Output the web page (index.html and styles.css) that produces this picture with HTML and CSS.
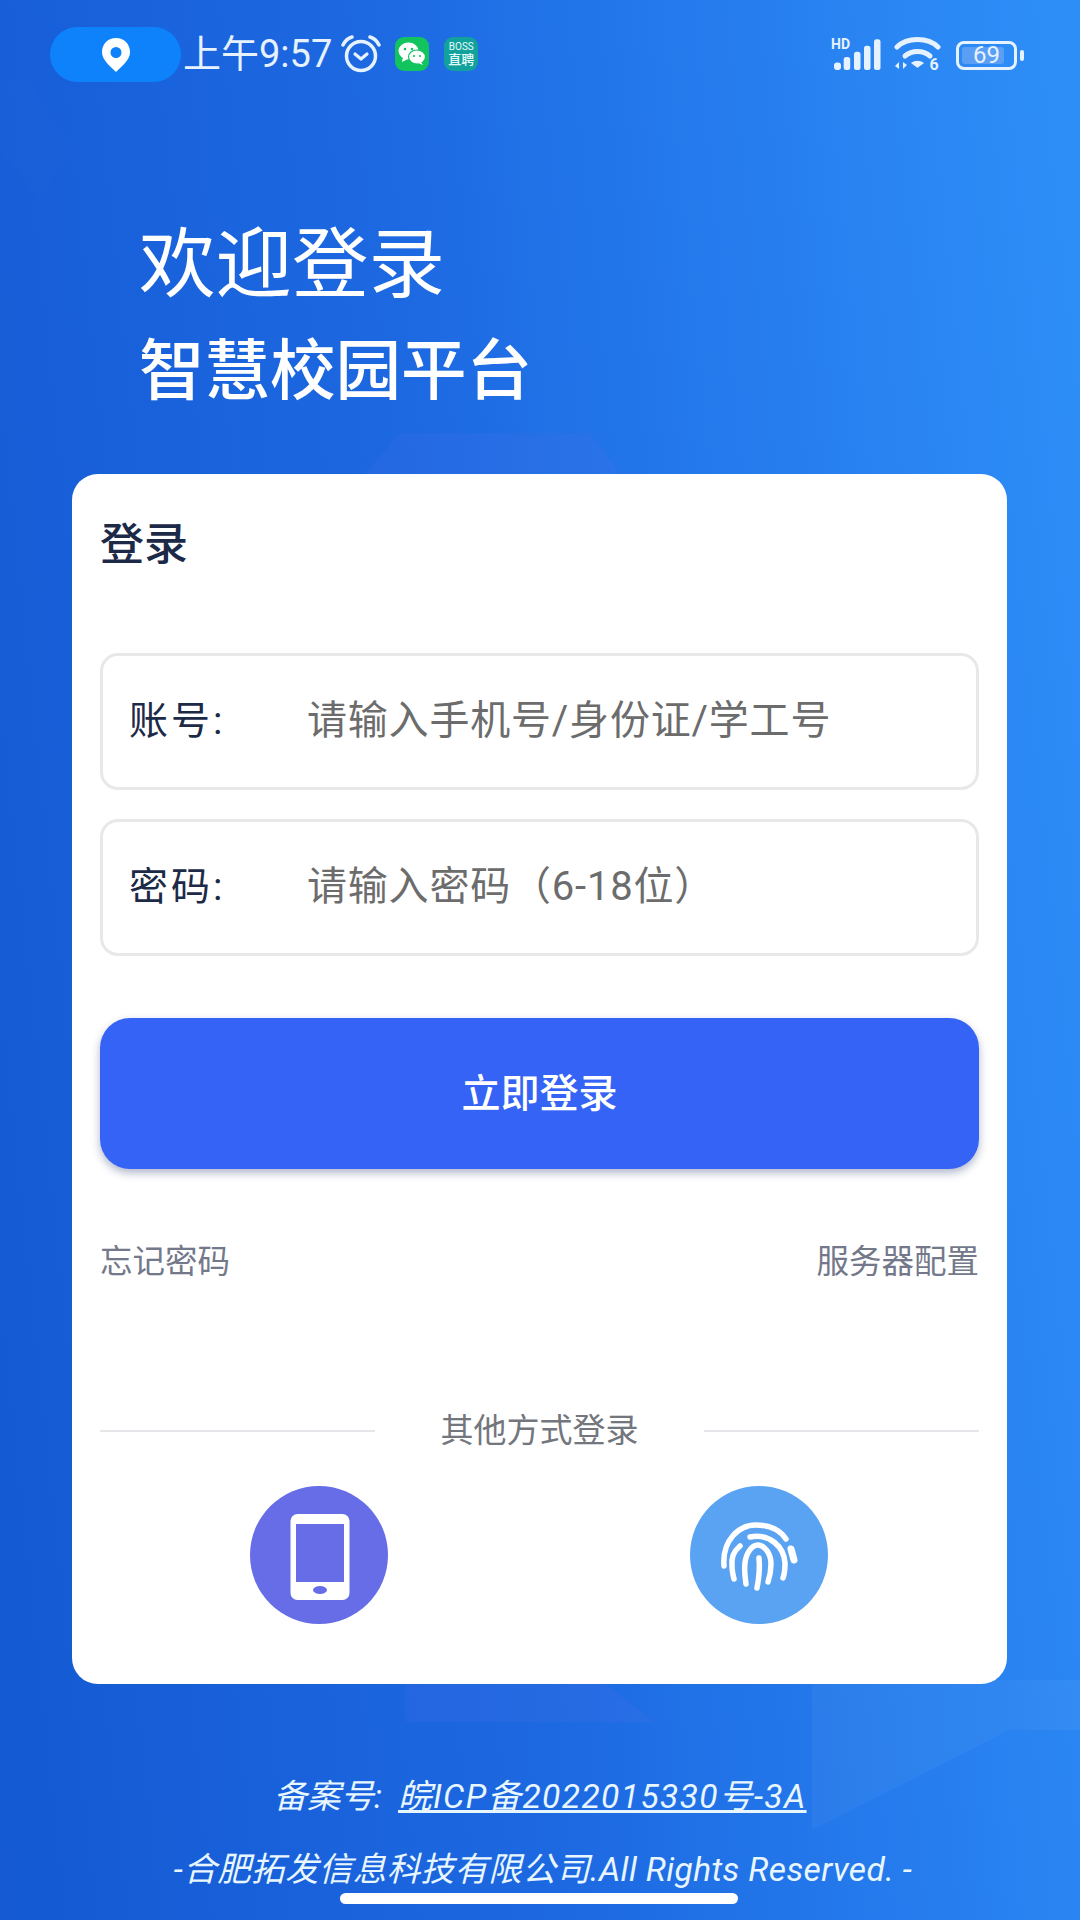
FILE: index.html
```html
<!DOCTYPE html>
<html lang="zh-CN">
<head>
    <meta charset="UTF-8">
    <meta name="viewport" content="width=device-width, initial-scale=1.0">
    <title>欢迎登录</title>
    <link rel="stylesheet" href="styles.css">
</head>
<body>
    <div class="page">
        <!-- faint shapes in the background -->
        <svg class="bg-shapes" width="1080" height="1920" viewBox="0 0 1080 1920">
            <polygon points="0,80 30,80 70,150 40,200 0,150" fill="#fff" opacity="0.012"/>
            <polygon points="400,433 590,433 620,474 365,474" fill="#5a70e8" opacity="0.14"/>
            <polygon points="406,1680 600,1680 654,1722 406,1722" fill="#5a70e8" opacity="0.16"/>
            <polygon points="812,1680 1080,1680 1080,1730 1010,1730 812,1830" fill="#fff" opacity="0.04"/>
        </svg>

        <div class="status-bar">
            <div class="status-left">
                <div class="location-pill">
                    <svg width="28" height="34" viewBox="0 0 28 34"><path fill="#fff" fill-rule="evenodd" d="M14 0C6 0 0 6 0 14c0 8 8 14 14 20 6-6 14-12 14-20C28 6 22 0 14 0zm0 9a5.5 5.500 0 1 1 0 11 5.500 5.500 0 0 1 0-11z"/></svg>
                </div>
                <span class="clock">上午9:57</span>
                <svg class="alarm" width="40" height="38" viewBox="0 0 40 38" fill="none" stroke="#e6f2ff" stroke-linecap="round">
                    <circle cx="20" cy="21" r="14.500" stroke-width="3.500"/>
                    <path d="M14 19l6 5 6-5" stroke-width="3.200" stroke-linejoin="round"/>
                    <path d="M2 10C4 6 7 3 11 2M38 10c-2-4-5-7-9-8" stroke-width="3.500"/>
                </svg>
                <div class="app-icon wechat">
                    <svg width="28" height="24" viewBox="0 0 28 24">
                        <ellipse cx="10.500" cy="9" rx="10" ry="8.500" fill="#fff"/>
                        <path d="M5 15l-1 5 6-3z" fill="#fff"/>
                        <ellipse cx="19" cy="15" rx="8.500" ry="7" fill="#fff" stroke="#12c45d" stroke-width="1.200"/>
                        <path d="M23 20l2 3-5-2z" fill="#fff"/>
                        <circle cx="7" cy="7" r="1.300" fill="#12c45d"/>
                        <circle cx="14" cy="7" r="1.300" fill="#12c45d"/>
                        <circle cx="16" cy="14" r="1.100" fill="#12c45d"/>
                        <circle cx="22" cy="14" r="1.100" fill="#12c45d"/>
                    </svg>
                </div>
                <div class="app-icon boss">
                    <span class="boss-en">BOSS</span>
                    <span class="boss-cn">直聘</span>
                </div>
            </div>
            <div class="status-right">
                <svg class="signal" width="50" height="42" viewBox="0 -8 50 42">
                    <text x="0" y="11" class="hd-text">HD</text>
                    <g fill="#e6f2ff">
                        <rect x="3" y="24.500" width="7" height="7.500" rx="3"/>
                        <rect x="12.700" y="19" width="6.500" height="13" rx="2.500"/>
                        <rect x="23" y="13.700" width="6.500" height="18.300" rx="2.500"/>
                        <rect x="33" y="7.700" width="6.500" height="24.300" rx="2.500"/>
                        <rect x="43" y="1.300" width="6.500" height="30.700" rx="2.500"/>
                    </g>
                </svg>
                <svg class="wifi" width="48" height="42" viewBox="0 0 48 42" fill="none" stroke="#e6f2ff" stroke-width="5" stroke-linecap="round">
                    <path d="M3 11C13 1 34 1 44 11"/>
                    <path d="M11 20c7-6 18-6 25 0"/>
                    <path d="M18 27c3-2 8-2 11 0l-5.500 4z" fill="#e6f2ff" stroke-width="1.500" stroke-linejoin="round"/>
                    <path d="M5 26v7l-4-3zM9 33v-7l4 3z" fill="#e6f2ff" stroke="none"/>
                    <text x="35.500" y="34" class="wifi-six">6</text>
                </svg>
                <div class="battery">
                    <div class="battery-body">
                        <div class="battery-fill"></div>
                        <span class="battery-num">69</span>
                    </div>
                    <div class="battery-cap"></div>
                </div>
            </div>
        </div>

        <div class="welcome">
            <h1>欢迎登录</h1>
            <h2>智慧校园平台</h2>
        </div>

        <div class="card">
            <h3 class="card-title">登录</h3>

            <div class="field">
                <span class="field-label">账号:</span>
                <span class="field-hint">请输入手机号/身份证/学工号</span>
            </div>
            <div class="field">
                <span class="field-label">密码:</span>
                <span class="field-hint">请输入密码（6-18位）</span>
            </div>

            <button class="login-btn">立即登录</button>

            <div class="links">
                <span>忘记密码</span>
                <span>服务器配置</span>
            </div>

            <div class="divider">
                <span class="divider-line"></span>
                <span class="divider-text">其他方式登录</span>
                <span class="divider-line"></span>
            </div>

            <div class="other-ways">
                <div class="way way-phone">
                    <svg width="60" height="86" viewBox="0 0 60 86">
                        <rect width="59" height="86" x="0.500" rx="7" fill="#fff"/>
                        <rect x="6" y="10" width="48" height="58" fill="#666de6"/>
                        <ellipse cx="30" cy="76" rx="7" ry="4" fill="#666de6"/>
                    </svg>
                </div>
                <div class="way way-finger">
                    <svg width="78" height="72" viewBox="0 0 78 72" fill="none" stroke="#fff" stroke-width="5.500" stroke-linecap="round">
                        <path d="M3 44C1 18 18 3 35 3c13 0 24 5 30 14"/>
                        <path d="M29 15c20-4 34 10 35 26 0 6 0 10-2 15"/>
                        <path d="M19 24c-6 5-9 12-8 20 0 5 1 9 2 13"/>
                        <path d="M25 62c-1-7-2-14-1-21 1-10 7-18 13-18s13 8 13 19c0 6-1 12-3 18"/>
                        <path d="M38 36c1 10 0 20-2 30"/>
                        <path d="M70 27l3 11" stroke-width="7"/>
                    </svg>
                </div>
            </div>
        </div>

        <div class="footer">
            <p><span class="record-label">备案号:</span><u class="record-no">皖ICP备2022015330号-3A</u></p>
            <p class="copyright">-合肥拓发信息科技有限公司.All Rights Reserved. -</p>
        </div>

        <div class="home-bar"></div>
    </div>
</body>
</html>
```

FILE: styles.css
```css
* {
    box-sizing: border-box;
}

body {
    margin: 0;
    font-family: 'Roboto', 'Noto Sans CJK SC', sans-serif;
}

.page {
    position: relative;
    width: 1080px;
    height: 1920px;
    overflow: hidden;
    padding-top: 27px;
    background: linear-gradient(84deg, #1459d2 0%, #1d69e2 45%, #2a86f3 85%, #2e8ff8 100%);
}

.bg-shapes {
    position: absolute;
    left: 0;
    top: 0;
}

/* Status bar */
.status-bar {
    position: relative;
    display: flex;
    justify-content: space-between;
    align-items: center;
    height: 55px;
    padding: 0 56px 0 50px;
}

.status-left,
.status-right {
    display: flex;
    align-items: center;
}

.location-pill {
    display: flex;
    align-items: center;
    justify-content: center;
    width: 131px;
    height: 55px;
    border-radius: 28px;
    background-color: #0d82fb;
}

.clock {
    margin-left: 2px;
    font-size: 38px;
    line-height: 55px;
    color: #e6f2ff;
}

.alarm {
    margin-left: 9px;
    margin-top: -2px;
}

.app-icon {
    display: flex;
    flex-direction: column;
    align-items: center;
    justify-content: center;
    width: 34px;
    height: 34px;
    margin-top: -2px;
    border-radius: 9px;
}

.wechat {
    margin-left: 14px;
    background-color: #12c45d;
}

.boss {
    margin-left: 15px;
    background-color: #12a29e;
    color: #e6fbf8;
}

.boss-en {
    font-size: 10px;
    line-height: 11px;
}

.boss-cn {
    font-size: 13px;
    line-height: 15px;
    font-weight: 500;
}

.status-right {
    margin-top: -4px;
}

.signal {
    margin-top: -3px;
    margin-right: 13px;
}

.wifi {
    margin-top: 8px;
    margin-right: 14px;
}

.hd-text {
    font-size: 14px;
    font-weight: 700;
    fill: #e6f2ff;
}

.wifi-six {
    font-size: 16px;
    font-weight: 700;
    fill: #e6f2ff;
    stroke: none;
}

.battery {
    display: flex;
    align-items: center;
    gap: 3px;
    margin-top: 6px;
}

.battery-body {
    position: relative;
    width: 61px;
    height: 29px;
    padding: 3px;
    border: 3px solid #e6f2ff;
    border-radius: 8px;
}

.battery-fill {
    width: 85%;
    height: 100%;
    border-radius: 3px;
    background-color: #5b9ff5;
}

.battery-num {
    position: absolute;
    left: 0;
    right: 0;
    top: -4px;
    text-align: center;
    font-size: 24px;
    line-height: 31px;
    color: #e6f2ff;
}

.battery-cap {
    width: 4px;
    height: 11px;
    border-radius: 2px;
    background-color: #e6f2ff;
}

/* Welcome title */
.welcome {
    position: relative;
    padding: 133px 0 0 139px;
    color: #fff;
}

.welcome h1 {
    margin: 0;
    font-size: 76.5px;
    line-height: 100px;
    font-weight: 400;
}

.welcome h2 {
    margin: 12px 0 0;
    font-size: 65.5px;
    line-height: 90px;
    font-weight: 500;
}

/* Login card */
.card {
    position: relative;
    width: 935px;
    height: 1210px;
    margin: 57px 0 0 72px;
    padding: 42px 28px 0;
    border-radius: 26px;
    background-color: #fff;
}

.card-title {
    margin: 0 0 79px;
    font-size: 44px;
    line-height: 58px;
    font-weight: 500;
    color: #1c2a48;
}

.field {
    display: flex;
    align-items: center;
    height: 137px;
    margin-bottom: 29px;
    padding: 0 0 10px 26px;
    border: 3px solid #e8e8e8;
    border-radius: 18px;
}

.field-label {
    width: 178px;
    font-size: 39px;
    letter-spacing: 3px;
    color: #1c2a48;
}

.field-hint {
    font-size: 40px;
    letter-spacing: 0.8px;
    color: #6c6c6c;
}

.login-btn {
    display: block;
    width: 879px;
    height: 151px;
    margin-top: 62px;
    padding-bottom: 8px;
    border: none;
    border-radius: 30px;
    background-color: #3563f6;
    box-shadow: 0 4px 8px rgba(30, 50, 110, 0.35);
    font-family: inherit;
    font-size: 39px;
    font-weight: 500;
    color: #fff;
}

.links {
    display: flex;
    justify-content: space-between;
    margin-top: 71px;
    font-size: 32.5px;
    line-height: 44px;
    color: #73788a;
}

.divider {
    display: flex;
    align-items: center;
    justify-content: space-between;
    margin-top: 125px;
}

.divider-line {
    width: 275px;
    height: 2px;
    background-color: #e4e6ea;
}

.divider-text {
    font-size: 33px;
    line-height: 44px;
    color: #73767c;
}

.other-ways {
    display: flex;
    margin-top: 33px;
    padding-left: 150px;
    gap: 302px;
}

.way {
    display: flex;
    align-items: center;
    justify-content: center;
    width: 138px;
    height: 138px;
    border-radius: 50%;
}

.way-phone {
    padding: 3px 0 0 2px;
    background-color: #666de6;
}

.way-finger {
    padding: 5px 0 0 2px;
    background-color: #5aa2f2;
}

/* Footer */
.footer {
    position: relative;
    margin-top: 91px;
    text-align: center;
    font-size: 33.5px;
    font-style: italic;
    color: #e8f6ff;
}

.footer p {
    margin: 0 0 29px;
    line-height: 44px;
}

.record-label {
    margin-right: 16px;
}

.record-no {
    letter-spacing: 1.4px;
}

.copyright {
    padding-left: 6px;
    letter-spacing: 0.4px;
}

.home-bar {
    position: absolute;
    left: 340px;
    top: 1893px;
    width: 398px;
    height: 11px;
    border-radius: 6px;
    background-color: #fff;
}
```
